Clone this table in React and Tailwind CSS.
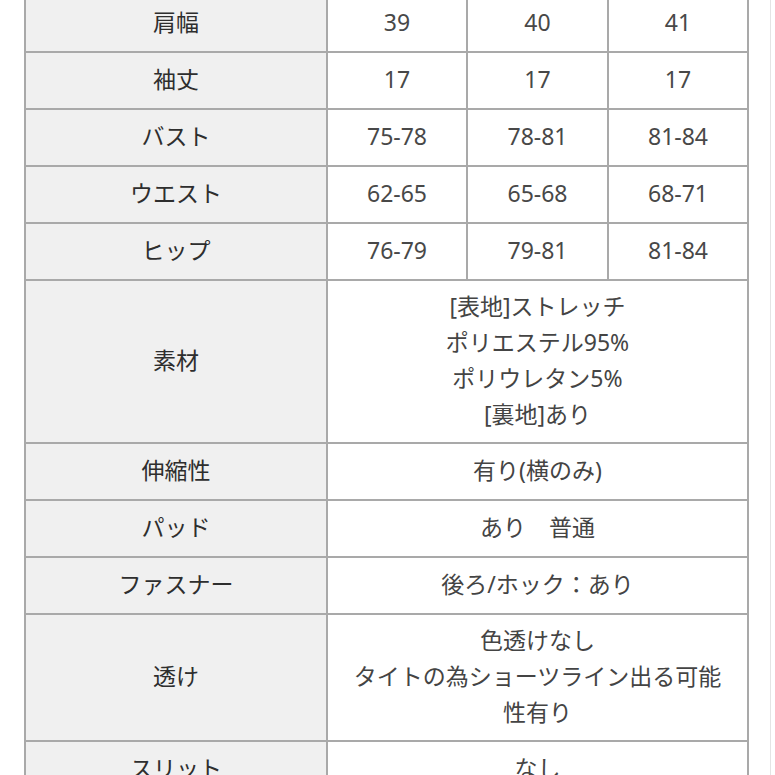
import React from "react";

const rows = [
  { label: "肩幅", vals: ["39", "40", "41"], h: "h-[57px]" },
  { label: "袖丈", vals: ["17", "17", "17"], h: "h-[57px]" },
  { label: "バスト", vals: ["75-78", "78-81", "81-84"], h: "h-[57px]" },
  { label: "ウエスト", vals: ["62-65", "65-68", "68-71"], h: "h-[57px]" },
  { label: "ヒップ", vals: ["76-79", "79-81", "81-84"], h: "h-[57px]" },
  {
    label: "素材",
    merged: ["[表地]ストレッチ", "ポリエステル95%", "ポリウレタン5%", "[裏地]あり"],
    h: "h-[163px]",
  },
  { label: "伸縮性", merged: ["有り(横のみ)"], h: "h-[57px]" },
  { label: "パッド", merged: ["あり\u3000普通"], h: "h-[57px]" },
  { label: "ファスナー", merged: ["後ろ/ホック：あり"], h: "h-[57px]" },
  {
    label: "透け",
    merged: ["色透けなし", "タイトの為ショーツライン出る可能", "性有り"],
    h: "h-[127px]",
  },
  { label: "スリット", merged: ["なし"], h: "h-[57px]" },
];

const font = {
  fontFamily: '"Noto Sans", "Noto Sans CJK JP", sans-serif',
};

export default function App() {
  return (
    <div className="w-[775px] h-[775px] overflow-hidden bg-white relative" style={font}>
      <div className="absolute left-[770px] top-0 w-px h-[775px] bg-[#e4e4e4]" />
      <div className="mt-[-4px] ml-[24px] grid grid-cols-[304px_140px_141px_140px]">
        {rows.map((r, i) => (
          <React.Fragment key={i}>
            <div
              className={`${r.h} pb-[4px] border-l-2 border-r-2 border-b-2 border-[#a9a9a9] bg-[#f0f0f0] flex items-center justify-center text-[23px] font-normal text-[#2e2e2e] leading-[36px]`}
            >
              {r.label}
            </div>
            {r.vals ? (
              r.vals.map((v, j) => (
                <div
                  key={j}
                  className={`${r.h} pb-[4px] border-r-2 border-b-2 border-[#a9a9a9] bg-white flex items-center justify-center text-[23px] text-[#484848] leading-[36px]`}
                >
                  {v}
                </div>
              ))
            ) : (
              <div
                className={`${r.h} pb-[4px] col-span-3 border-r-2 border-b-2 border-[#a9a9a9] bg-white flex flex-col items-center justify-center text-[23px] text-[#444] leading-[36px] text-center`}
              >
                {r.merged.map((t, k) => (
                  <div key={k} className="whitespace-pre">{t}</div>
                ))}
              </div>
            )}
          </React.Fragment>
        ))}
      </div>
    </div>
  );
}
